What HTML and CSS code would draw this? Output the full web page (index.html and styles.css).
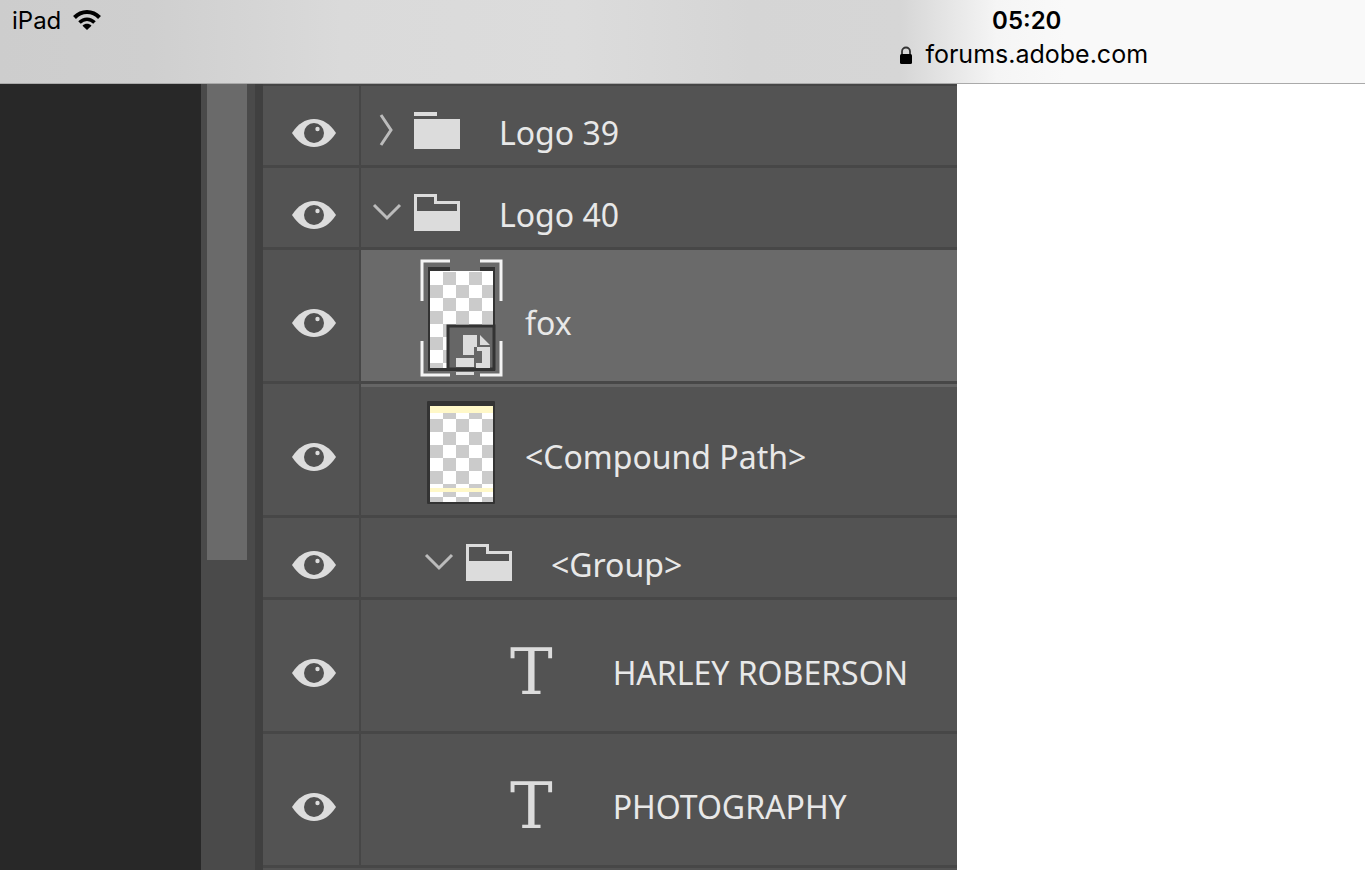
FILE: index.html
```
<!DOCTYPE html>
<html lang="en">
<head>
  <meta charset="UTF-8">
  <meta name="viewport" content="width=device-width, initial-scale=1.0">
  <title>forums.adobe.com</title>
  <link rel="stylesheet" href="styles.css">
</head>
<body>
  <!-- Shared shapes -->
  <svg class="defs" width="0" height="0" aria-hidden="true">
    <defs>
      <pattern id="checker" width="26" height="26" patternUnits="userSpaceOnUse" x="17" y="13">
        <rect width="26" height="26" fill="#fff"/>
        <path d="M13 0h13v13H13zM0 13h13v13H0z" fill="#cbcbcb"/>
      </pattern>
      <symbol id="eye" viewBox="0 0 44 30">
        <path d="M0 15C6 6 13 1 22 1s16 5 22 14c-6 9-13 14-22 14S6 24 0 15z" fill="#dcdcdc"/>
        <circle cx="22" cy="15" r="10" fill="#505050"/>
        <circle cx="25.500" cy="11" r="2.200" fill="#dcdcdc"/>
      </symbol>
      <symbol id="chevron-right" viewBox="0 0 30 34">
        <path d="M9 1l10 15L9 31" fill="none" stroke="#bcbcbc" stroke-width="3"/>
      </symbol>
      <symbol id="chevron-down" viewBox="0 0 30 34">
        <path d="M2 9l13 13L28 9" fill="none" stroke="#bcbcbc" stroke-width="3"/>
      </symbol>
      <symbol id="folder" viewBox="0 0 48 38">
        <path d="M1 0h23v4H1zM1 7h46v30H1z" fill="#dcdcdc"/>
      </symbol>
      <symbol id="folder-open" viewBox="0 0 48 38">
        <path fill-rule="evenodd" d="M1 0h23v7h23v30H1zM4 3v14h40v-7H21V3z" fill="#dcdcdc"/>
      </symbol>
    </defs>
  </svg>

  <header class="browser-bar">
    <div class="device">
      <span>iPad</span>
      <!-- Wifi Icon -->
      <svg width="28" height="20" viewBox="0 0 28 20" aria-hidden="true">
        <path d="M1.500 7.500C8.500 .2 19.500 .2 26.500 7.500" fill="none" stroke="#000" stroke-width="4"/>
        <path d="M6.500 12.500c4.500-4.400 10.500-4.400 15 0" fill="none" stroke="#000" stroke-width="3.600"/>
        <path d="M9.500 15.700c2.600-2.500 6.400-2.500 9 0L14 20z" fill="#000"/>
      </svg>
    </div>
    <div class="page-info">
      <time class="clock">05:20</time>
      <a class="address" href="#">
        <!-- Lock Icon -->
        <svg width="14" height="18" viewBox="0 0 14 18" aria-hidden="true">
          <path d="M3 9V5.500a4 4 0 0 1 8 0V9" fill="none" stroke="#333" stroke-width="1.800"/>
          <rect x="1" y="8" width="12" height="10" rx="1.500" fill="#000"/>
        </svg>
        <span>forums.adobe.com</span>
      </a>
    </div>
  </header>

  <main class="workspace">
    <div class="canvas"></div>
    <div class="scroll-track"><div class="scroll-thumb"></div></div>
    <ul class="layers">
      <li class="row">
        <button type="button" class="visibility" aria-label="Toggle Logo 39"><svg width="44" height="30"><use href="#eye"/></svg></button>
        <div class="layer">
          <button type="button" class="twist" aria-label="Expand Logo 39"><svg width="30" height="34"><use href="#chevron-right"/></svg></button>
          <svg class="folder" width="48" height="38"><use href="#folder"/></svg>
          <span class="name">Logo 39</span>
        </div>
      </li>
      <li class="row">
        <button type="button" class="visibility" aria-label="Toggle Logo 40"><svg width="44" height="30"><use href="#eye"/></svg></button>
        <div class="layer">
          <button type="button" class="twist" aria-label="Collapse Logo 40"><svg width="30" height="34"><use href="#chevron-down"/></svg></button>
          <svg class="folder" width="48" height="38"><use href="#folder-open"/></svg>
          <span class="name">Logo 40</span>
        </div>
      </li>
      <li class="row tall selected">
        <button type="button" class="visibility" aria-label="Toggle fox"><svg width="44" height="30"><use href="#eye"/></svg></button>
        <div class="layer nested">
          <svg class="thumb" width="96" height="124" viewBox="0 0 96 124" aria-hidden="true">
            <rect x="15" y="8" width="67" height="104" fill="#333"/>
            <path d="M37 7h30v5H37z" fill="#6a6a6a"/>
            <rect x="17" y="12" width="63" height="97" fill="#fff"/>
            <rect x="17" y="13" width="63" height="96" fill="url(#checker)"/>
            <rect x="35" y="67" width="46" height="43" fill="#666" stroke="#333" stroke-width="3"/>
            <!-- Smart object badge -->
            <path d="M50 76h14v12h-3v8H50zM67 76l10 10H67zM64 88h13v21H63v-5h6V92h-5z" fill="#dcdcdc"/>
            <path d="M43 99h18v9H43zM43 113h18v3H43z" fill="#dcdcdc"/>
            <path d="M9 42V2h28M67 2h21v40M9 82v34h28M67 116h21V82" fill="none" stroke="#f4f4f4" stroke-width="3"/>
          </svg>
          <span class="name">fox</span>
        </div>
      </li>
      <li class="row tall">
        <button type="button" class="visibility" aria-label="Toggle Compound Path"><svg width="44" height="30"><use href="#eye"/></svg></button>
        <div class="layer nested">
          <svg class="thumb" width="96" height="124" viewBox="0 0 96 124" aria-hidden="true">
            <rect x="14" y="8" width="68" height="103" rx="1" fill="#333"/>
            <rect x="17" y="13" width="63" height="96" fill="url(#checker)"/>
            <path d="M17 13h63v7H17zM17 95h63v4H17z" fill="#fff8c8"/>
          </svg>
          <span class="name">&lt;Compound Path&gt;</span>
        </div>
      </li>
      <li class="row">
        <button type="button" class="visibility" aria-label="Toggle Group"><svg width="44" height="30"><use href="#eye"/></svg></button>
        <div class="layer nested">
          <button type="button" class="twist" aria-label="Collapse Group"><svg width="30" height="34"><use href="#chevron-down"/></svg></button>
          <svg class="folder" width="48" height="38"><use href="#folder-open"/></svg>
          <span class="name">&lt;Group&gt;</span>
        </div>
      </li>
      <li class="row tall">
        <button type="button" class="visibility" aria-label="Toggle HARLEY ROBERSON"><svg width="44" height="30"><use href="#eye"/></svg></button>
        <div class="layer deep">
          <span class="type-icon">T</span>
          <span class="name">HARLEY ROBERSON</span>
        </div>
      </li>
      <li class="row tall">
        <button type="button" class="visibility" aria-label="Toggle PHOTOGRAPHY"><svg width="44" height="30"><use href="#eye"/></svg></button>
        <div class="layer deep">
          <span class="type-icon">T</span>
          <span class="name">PHOTOGRAPHY</span>
        </div>
      </li>
    </ul>
  </main>
</body>
</html>
```
FILE: styles.css
```
* { box-sizing: border-box; }
body {
  margin: 0;
  height: 100vh;
  display: flex;
  flex-direction: column;
  overflow: hidden;
  background: #fff;
  color: #000;
  font-family: Inter, "Liberation Sans", sans-serif;
}
.defs { position: absolute; }
button {
  background: none;
  border: none;
  padding: 0;
  cursor: pointer;
}
svg { display: block; flex-shrink: 0; }

.browser-bar {
  display: grid;
  grid-template-columns: 1fr 1fr;
  flex-shrink: 0;
  padding: 4px 0 12px;
  border-bottom: 1px solid #aaa;
  background: linear-gradient(90deg, #cdcdcd 0%, #cfcfcf 11%, #dadada 25%, #dcdcdc 42%, #d5d5d5 55%, #d6d6d6 66%, #f5f5f5 73%, #f9f9f9 78%);
}
.device {
  display: flex;
  align-items: center;
  gap: 12px;
  height: 32px;
  padding-left: 12px;
  font-size: 24px;
}
.page-info {
  display: flex;
  flex-direction: column;
  align-items: center;
}
.clock {
  padding-left: 6px;
  font-size: 24px;
  font-weight: 600;
  line-height: 34px;
}
.address {
  display: flex;
  align-items: center;
  gap: 12px;
  color: #000;
  font-size: 25px;
  line-height: 33px;
  text-decoration: none;
}

.workspace {
  display: flex;
  flex: 1;
  min-height: 0;
  width: 70.1%;
  background: #535353;
}
.canvas {
  flex: 0 0 21%;
  background: #282828;
}
.scroll-track {
  flex-shrink: 0;
  width: 62px;
  padding: 0 8px 0 6px;
  border-right: 8px solid #404040;
  background: #4a4a4a;
}
.scroll-thumb {
  width: 40px;
  height: 476px;
  background: #6a6a6a;
}
.layers {
  flex: 1;
  min-width: 0;
  margin: 0;
  padding: 0;
  list-style: none;
  border-top: 2px solid #454545;
}
.row {
  display: flex;
  height: 82px;
  border-bottom: 3px solid #474747;
}
.row.tall { height: 134px; }
.visibility {
  display: flex;
  align-items: center;
  justify-content: center;
  flex-shrink: 0;
  width: 98px;
  padding: 14px 0 0 6px;
  border-right: 2px solid #464646;
}
.layer {
  display: flex;
  align-items: center;
  flex: 1;
  min-width: 0;
  padding-top: 10px;
}
.layer.nested { padding-left: 52px; }
.layer.deep { padding-left: 149px; }
.selected .layer { background: #6a6a6a; }
.selected + .row .layer { box-shadow: inset 0 3px #656565; }
.twist {
  display: flex;
  justify-content: center;
  flex-shrink: 0;
  width: 52px;
}
.folder { margin-right: 38px; }
.thumb { margin-right: 16px; }
.type-icon {
  padding-top: 2px;
  margin-right: 60px;
  color: #dcdcdc;
  font-family: "DejaVu Serif", serif;
  font-size: 64px;
  line-height: 64px;
}
.name {
  padding-top: 4px;
  color: #e8e8e8;
  font-family: "Noto Sans", sans-serif;
  font-size: 32px;
  line-height: 36px;
  white-space: nowrap;
}
```
